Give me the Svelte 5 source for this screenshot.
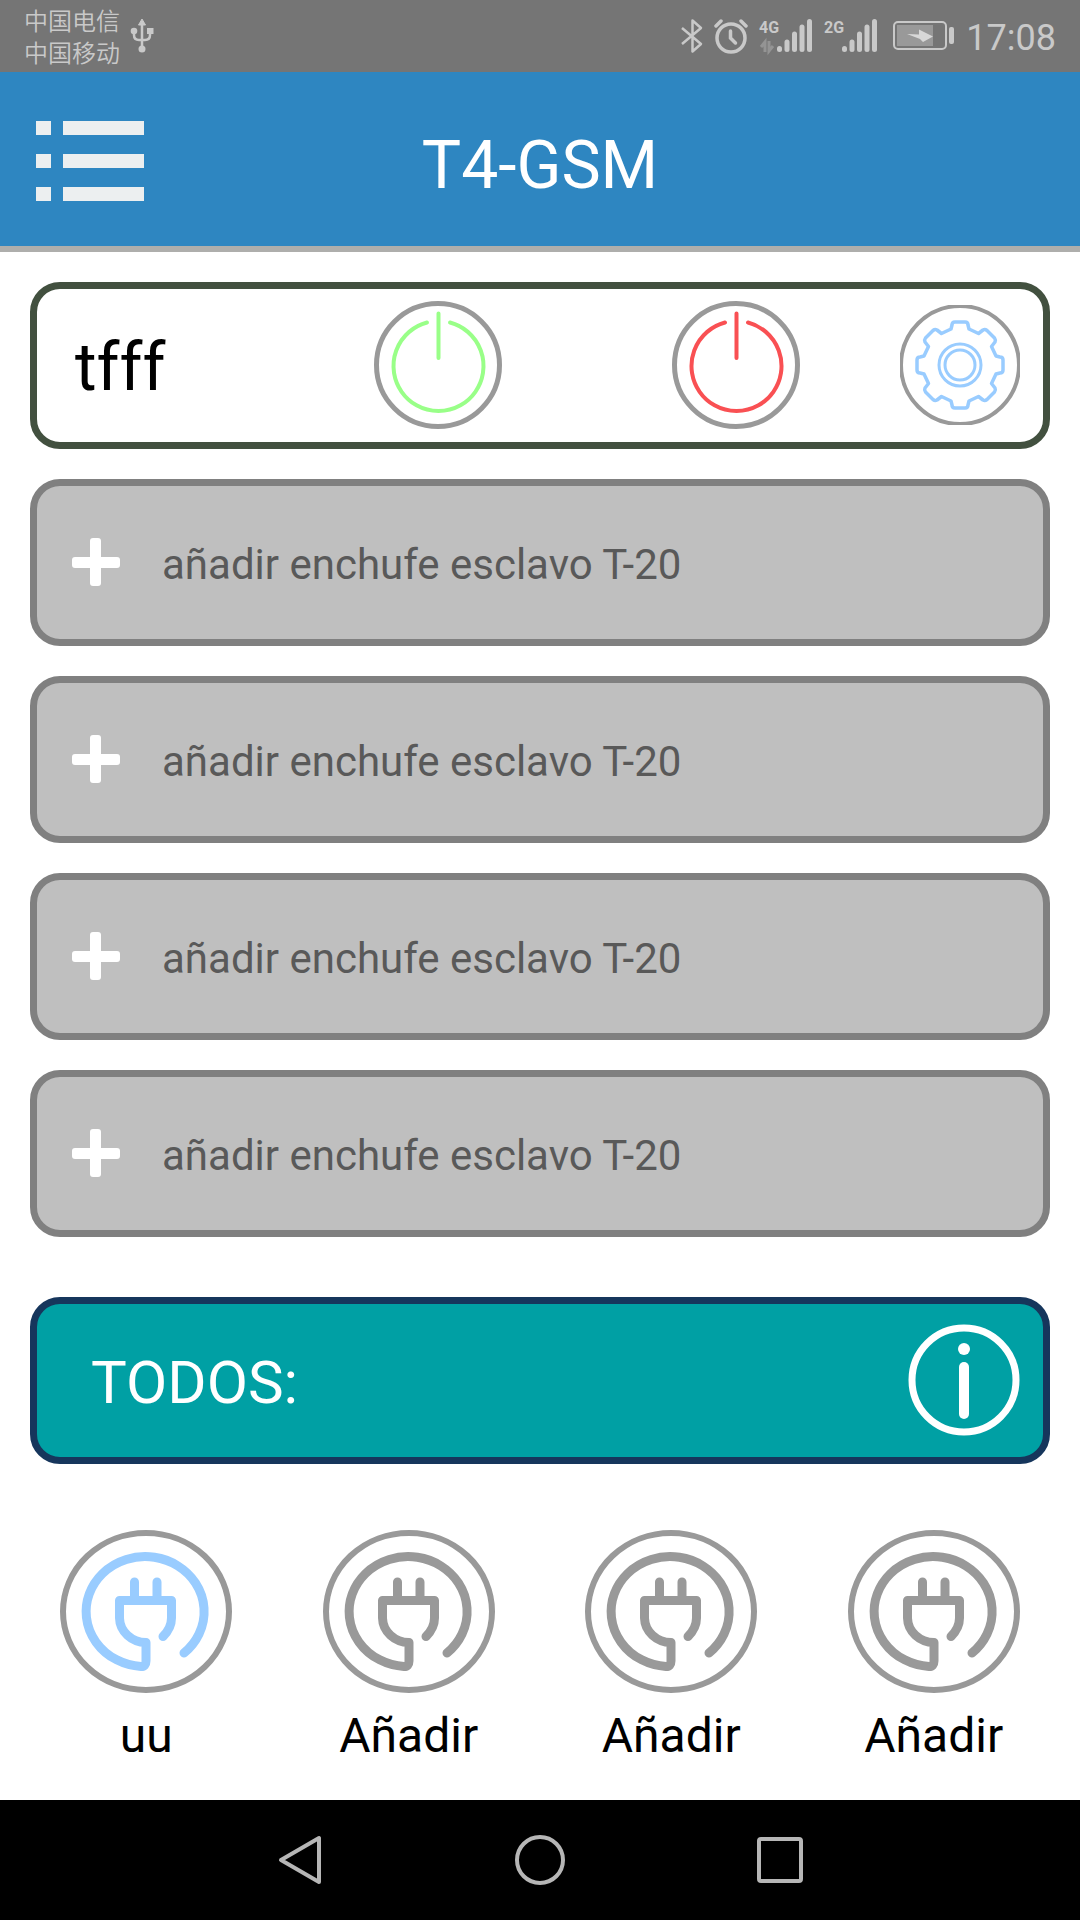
<script>
  let deviceName = $state('tfff');

  const slaves = [1, 2, 3, 4];

  const plugs = [
    { label: 'uu', active: true },
    { label: 'Añadir', active: false },
    { label: 'Añadir', active: false },
    { label: 'Añadir', active: false }
  ];

  // x centre and top of each signal bar
  const bars = [
    [20.5, 32.5],
    [28, 26],
    [35.5, 18],
    [43, 11],
    [50.5, 5.5]
  ];
</script>

{#snippet signal(name, data)}
  <svg class="signal" width="54" height="40" viewBox="0 0 54 40" role="img" aria-label={name}>
    <text x="0" y="17">{name}</text>
    {#if data}
      <path d="M6 36V26L2 31M10 25v10l4-5" fill="none" stroke="#949494" stroke-width="3" />
    {/if}
    {#each bars as [x, top]}
      <path d="M{x} {top}V33.500" stroke="#c9c9c9" stroke-width="5" stroke-linecap="round" />
    {/each}
  </svg>
{/snippet}

{#snippet power(color, label)}
  <button class="icon-btn" aria-label={label}>
    <svg width="128" height="128" viewBox="0 0 128 128" fill="none" stroke-width="4" stroke-linecap="round">
      <circle cx="64" cy="64" r="61.500" stroke="#999" stroke-width="5" />
      <path d="M53 21.500A45 45 0 1 0 76 21.500M64.500 12.500V57" stroke={color} />
    </svg>
  </button>
{/snippet}

<div class="screen">
  <div class="status">
    <div class="carriers">
      <span>中国电信</span>
      <span>中国移动</span>
    </div>
    <svg class="usb" width="24" height="36" viewBox="0 0 24 36" fill="none" stroke="#c9c9c9" stroke-width="2.500">
      <path d="M12 30V5M4 13v4q0 5 5 5h6q5 0 5-5v-4" />
      <path d="M12 1l3.500 6h-7z" fill="#c9c9c9" stroke-width="1" />
      <circle cx="12" cy="31" r="3.500" fill="#c9c9c9" stroke="none" />
      <circle cx="4" cy="13" r="3.300" fill="#c9c9c9" stroke="none" />
      <path d="M17 10h6.500v6H17z" fill="#c9c9c9" stroke="none" />
    </svg>
    <div class="indicators">
      <svg width="22" height="36" viewBox="0 0 22 36" fill="none" stroke="#c9c9c9" stroke-width="2.500" stroke-linejoin="round">
        <path d="M1 10l19 16-8.500 7.500V2.500L20 10 1 26" />
      </svg>
      <svg width="34" height="36" viewBox="0 0 34 36" fill="none" stroke="#c9c9c9" stroke-linecap="round">
        <circle cx="17" cy="20" r="14" stroke-width="3.500" />
        <path d="M16.500 13v7l5 5" stroke-width="3.500" />
        <path d="M2 8l5-5M32 8l-5-5" stroke-width="3.500" />
      </svg>
      {@render signal('4G', true)}
      {@render signal('2G', false)}
      <svg class="battery" width="62" height="30" viewBox="0 0 62 30">
        <rect x="1" y="1" width="52" height="27" rx="4" fill="none" stroke="#c9c9c9" stroke-width="2" />
        <rect x="4" y="4" width="36" height="21" fill="#999" />
        <path d="M14 13l12 0.500v-5l14 7-10 5.500-3-3z" fill="#d8d8d8" />
        <rect x="56" y="6" width="5" height="17" rx="2" fill="#c9c9c9" />
      </svg>
      <time>17:08</time>
    </div>
  </div>

  <header>
    <button class="icon-btn" aria-label="Menú">
      <svg width="108" height="82" viewBox="0 0 108 82" fill="#eceff0">
        {#each [0, 33, 66] as y}
          <rect x="0" {y} width="15" height="14" />
          <rect x="27" {y} width="81" height="14" />
        {/each}
      </svg>
    </button>
    <h1>T4-GSM</h1>
  </header>

  <main>
    <section class="card device">
      <h2>{deviceName}</h2>
      {@render power('#99ff88', 'Encender')}
      {@render power('#f95053', 'Apagar')}
      <button class="icon-btn" aria-label="Ajustes">
        <svg width="120" height="120" viewBox="-60 -60 120 120" fill="none" stroke="#99ccff" stroke-width="3">
          <circle r="59" stroke="#999" stroke-width="4" />
          {#each [0, 90, 180, 270] as angle}
            <path
              transform="rotate({angle})"
              d="M0-43H5Q8-43 8-40L9-36L18.500-31.500L23-35Q25-36 27-34.500L34.500-27Q36-25 35-23L31.500-18.500L36-9L40-8Q43-8 43-5V0"
              stroke-width="3.500"
              stroke-linejoin="round"
            />
          {/each}
          <circle r="21" />
          <circle r="15" />
        </svg>
      </button>
    </section>

    {#each slaves as id (id)}
      <button class="card slave">
        <svg width="48" height="48" viewBox="0 0 48 48" fill="#fff" aria-hidden="true">
          <rect x="18" width="11" height="48" rx="3" />
          <rect y="19" width="48" height="11" rx="3" />
        </svg>
        <span>añadir enchufe esclavo T-20</span>
      </button>
    {/each}

    <section class="card all">
      <h2>TODOS:</h2>
      <button class="icon-btn" aria-label="Información">
        <svg width="112" height="112" viewBox="0 0 112 112" fill="#fff">
          <circle cx="56" cy="56" r="52" fill="none" stroke="#fff" stroke-width="7" />
          <circle cx="56" cy="25" r="6" />
          <rect x="51" y="38" width="10" height="57" rx="5" />
        </svg>
      </button>
    </section>

    <div class="plugs">
      {#each plugs as plug}
        <button class="plug" class:active={plug.active}>
          <svg width="172" height="164" viewBox="0 0 172 164" fill="none" stroke-linecap="round" stroke-linejoin="round" aria-hidden="true">
            <ellipse cx="86" cy="81.500" rx="83" ry="78.500" stroke="#999" stroke-width="6" />
            <path
              d="M124 123A59 55 0 1 0 81 136.500Q86 136.500 86 131V112.500A27 25 0 0 1 59.500 88V70.500H111.500V88Q111.500 98 103 106.500M74.500 70V52M97 70V52"
              stroke="currentColor"
              stroke-width="9"
            />
          </svg>
          <span>{plug.label}</span>
        </button>
      {/each}
    </div>
  </main>

  <nav>
    <button class="icon-btn" aria-label="Atrás">
      <svg width="50" height="50" viewBox="0 0 50 50"><path d="M44 3V47L6 25Z" /></svg>
    </button>
    <button class="icon-btn" aria-label="Inicio">
      <svg width="50" height="50" viewBox="0 0 50 50"><circle cx="25" cy="25" r="23" /></svg>
    </button>
    <button class="icon-btn" aria-label="Recientes">
      <svg width="50" height="50" viewBox="0 0 50 50"><rect x="4" y="4" width="42" height="42" rx="2" /></svg>
    </button>
  </nav>
</div>

<style>
  :global(body) {
    margin: 0;
    background: #fff;
  }

  .screen {
    display: flex;
    flex-direction: column;
    min-height: 100vh;
    font-family: Roboto, "Noto Sans CJK SC", sans-serif;
    color: #000;
  }

  button {
    padding: 0;
    border: none;
    background: none;
    font: inherit;
    color: inherit;
    cursor: pointer;
  }

  svg {
    display: block;
    flex: none;
  }

  h1,
  h2 {
    margin: 0;
    font-weight: 400;
  }

  .icon-btn {
    display: flex;
    justify-content: center;
  }

  /* system status bar */
  .status {
    display: flex;
    align-items: center;
    height: 72px;
    padding: 0 24px;
    background: #757575;
    color: #c9c9c9;
  }

  .carriers {
    display: flex;
    flex-direction: column;
    font-family: "Noto Sans CJK SC", sans-serif;
    font-size: 24px;
    font-weight: 350;
    line-height: 32px;
  }

  .usb {
    margin-left: 10px;
  }

  .indicators {
    display: flex;
    align-items: center;
    gap: 11px;
    margin-left: auto;
  }

  .signal text {
    font-size: 16px;
    font-weight: 700;
    fill: #c9c9c9;
  }

  .battery {
    margin-left: 4px;
  }

  time {
    padding-top: 3px;
    font-size: 36px;
  }

  header {
    display: grid;
    grid-template-columns: 1fr auto 1fr;
    align-items: center;
    justify-items: start;
    box-sizing: border-box;
    height: 180px;
    padding: 6px 36px 0;
    background: #2e86c1;
    border-bottom: 6px solid #aeaeac;
    color: #fff;
  }

  h1 {
    padding-top: 6px;
    font-size: 66px;
  }

  main {
    flex: 1;
    display: flex;
    flex-direction: column;
    gap: 30px;
    padding: 30px;
  }

  .card {
    display: flex;
    align-items: center;
    box-sizing: border-box;
    width: 100%;
    height: 167px;
    padding-bottom: 2px;
    border: 7px solid #808080;
    border-radius: 30px;
  }

  .card h2,
  .card span {
    padding-top: 5px;
  }

  .device {
    display: grid;
    grid-template-columns: 30fr 128px 17fr 128px 10fr 120px;
    padding-left: 38px;
    padding-right: 23px;
    border-color: #42503f;
  }

  .device h2 {
    font-size: 66px;
  }

  .device .icon-btn:nth-of-type(2) {
    grid-column: 4;
  }

  .device .icon-btn:nth-of-type(3) {
    grid-column: 6;
  }

  .slave {
    gap: 42px;
    padding-left: 35px;
    padding-right: 35px;
    background: #bfbfbf;
    color: #595959;
    font-size: 42px;
  }

  .all {
    justify-content: space-between;
    margin-top: 30px;
    padding-left: 54px;
    padding-right: 23px;
    border-color: #16365c;
    background: #00a0a4;
    color: #fff;
  }

  .all h2 {
    font-size: 60px;
  }

  .plugs {
    display: grid;
    grid-template-columns: repeat(4, 1fr);
    margin: 36px -15px 0;
  }

  .plug {
    display: flex;
    flex-direction: column;
    align-items: center;
    gap: 14px;
    font-size: 48px;
    line-height: 56px;
  }

  .plug svg {
    color: #999;
  }

  .plug.active svg {
    color: #99ccff;
  }

  nav {
    display: grid;
    grid-template-columns: 3fr repeat(3, 4fr) 3fr;
    align-items: center;
    height: 120px;
    background: #000;
  }

  nav .icon-btn:first-child {
    grid-column: 2;
  }

  nav svg {
    fill: none;
    stroke: #b6b6b6;
    stroke-width: 4px;
    stroke-linejoin: round;
  }
</style>
